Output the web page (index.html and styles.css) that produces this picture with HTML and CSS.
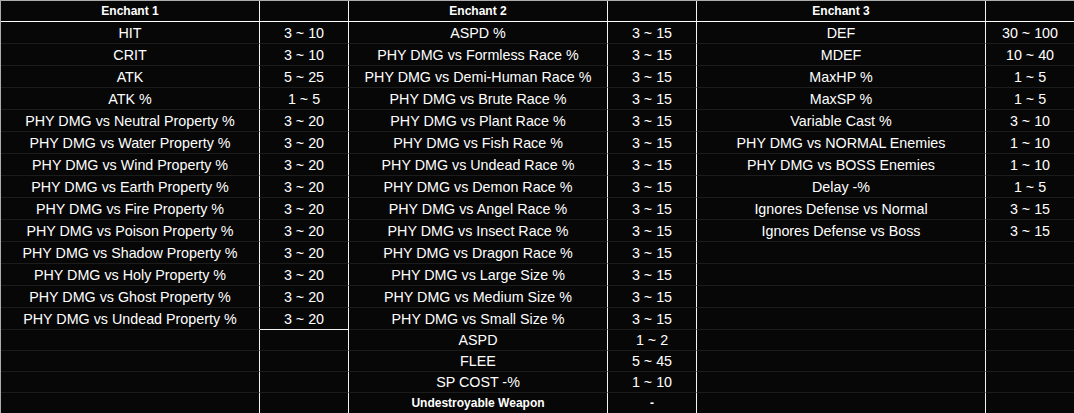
FILE: index.html
```html
<!DOCTYPE html>
<html lang="en">
<head>
    <title>Enchant List</title>
    <meta charset="utf-8">
    <meta name="viewport" content="width=device-width, initial-scale=1">
    <link rel="stylesheet" href="styles.css">
</head>
<body>
    <table class="enchant-table">
        <colgroup>
            <col class="col-name">
            <col class="col-value">
            <col class="col-name">
            <col class="col-value">
            <col class="col-name-wide">
            <col class="col-value-last">
        </colgroup>
        <thead>
            <tr>
                <th>Enchant 1</th>
                <th></th>
                <th>Enchant 2</th>
                <th></th>
                <th>Enchant 3</th>
                <th></th>
            </tr>
        </thead>
        <tbody>
            <tr>
                <td>HIT</td><td>3 ~ 10</td>
                <td>ASPD %</td><td>3 ~ 15</td>
                <td>DEF</td><td>30 ~ 100</td>
            </tr>
            <tr>
                <td>CRIT</td><td>3 ~ 10</td>
                <td>PHY DMG vs Formless Race %</td><td>3 ~ 15</td>
                <td>MDEF</td><td>10 ~ 40</td>
            </tr>
            <tr>
                <td>ATK</td><td>5 ~ 25</td>
                <td>PHY DMG vs Demi-Human Race %</td><td>3 ~ 15</td>
                <td>MaxHP %</td><td>1 ~ 5</td>
            </tr>
            <tr>
                <td>ATK %</td><td>1 ~ 5</td>
                <td>PHY DMG vs Brute Race %</td><td>3 ~ 15</td>
                <td>MaxSP %</td><td>1 ~ 5</td>
            </tr>
            <tr>
                <td>PHY DMG vs Neutral Property %</td><td>3 ~ 20</td>
                <td>PHY DMG vs Plant Race %</td><td>3 ~ 15</td>
                <td>Variable Cast %</td><td>3 ~ 10</td>
            </tr>
            <tr>
                <td>PHY DMG vs Water Property %</td><td>3 ~ 20</td>
                <td>PHY DMG vs Fish Race %</td><td>3 ~ 15</td>
                <td>PHY DMG vs NORMAL Enemies</td><td>1 ~ 10</td>
            </tr>
            <tr>
                <td>PHY DMG vs Wind Property %</td><td>3 ~ 20</td>
                <td>PHY DMG vs Undead Race %</td><td>3 ~ 15</td>
                <td>PHY DMG vs BOSS Enemies</td><td>1 ~ 10</td>
            </tr>
            <tr>
                <td>PHY DMG vs Earth Property %</td><td>3 ~ 20</td>
                <td>PHY DMG vs Demon Race %</td><td>3 ~ 15</td>
                <td>Delay -%</td><td>1 ~ 5</td>
            </tr>
            <tr>
                <td>PHY DMG vs Fire Property %</td><td>3 ~ 20</td>
                <td>PHY DMG vs Angel Race %</td><td>3 ~ 15</td>
                <td>Ignores Defense vs Normal</td><td>3 ~ 15</td>
            </tr>
            <tr>
                <td>PHY DMG vs Poison Property %</td><td>3 ~ 20</td>
                <td>PHY DMG vs Insect Race %</td><td>3 ~ 15</td>
                <td>Ignores Defense vs Boss</td><td>3 ~ 15</td>
            </tr>
            <tr>
                <td>PHY DMG vs Shadow Property %</td><td>3 ~ 20</td>
                <td>PHY DMG vs Dragon Race %</td><td>3 ~ 15</td>
                <td></td><td></td>
            </tr>
            <tr>
                <td>PHY DMG vs Holy Property %</td><td>3 ~ 20</td>
                <td>PHY DMG vs Large Size %</td><td>3 ~ 15</td>
                <td></td><td></td>
            </tr>
            <tr>
                <td>PHY DMG vs Ghost Property %</td><td>3 ~ 20</td>
                <td>PHY DMG vs Medium Size %</td><td>3 ~ 15</td>
                <td></td><td></td>
            </tr>
            <tr>
                <td>PHY DMG vs Undead Property %</td><td class="group-end">3 ~ 20</td>
                <td>PHY DMG vs Small Size %</td><td>3 ~ 15</td>
                <td></td><td></td>
            </tr>
            <tr class="short">
                <td></td><td></td>
                <td>ASPD</td><td>1 ~ 2</td>
                <td></td><td></td>
            </tr>
            <tr class="short">
                <td></td><td></td>
                <td>FLEE</td><td>5 ~ 45</td>
                <td></td><td></td>
            </tr>
            <tr class="short">
                <td></td><td></td>
                <td>SP COST -%</td><td>1 ~ 10</td>
                <td></td><td></td>
            </tr>
            <tr class="short">
                <td></td><td></td>
                <td class="strong">Undestroyable Weapon</td><td class="strong">-</td>
                <td></td><td></td>
            </tr>
        </tbody>
    </table>
</body>
</html>
```

FILE: styles.css
```css
* {
    box-sizing: border-box;
}

body {
    margin: 0;
    background-color: #070707;
    font-family: "Liberation Sans", Arial, sans-serif;
}

.enchant-table {
    width: 1074px;
    table-layout: fixed;
    border-collapse: separate;
    border-spacing: 0;
    border-top: 1px solid #adadad;
    border-left: 1px solid #adadad;
    background-color: #070707;
    color: #ffffff;
}

.col-name {
    width: 259px;
}

.col-value {
    width: 89px;
}

.col-name-wide {
    width: 289px;
}

.col-value-last {
    width: 88px;
}

th, td {
    padding: 1px 0 0 0;
    text-align: center;
    white-space: nowrap;
    overflow: hidden;
    font-size: 14.3px;
    line-height: 20px;
    border-right: 1px solid #f2f2f2;
    border-bottom: 1px solid #1c1c1c;
}

th:last-child, td:last-child {
    border-right: none;
}

thead th {
    font-size: 12px;
    font-weight: bold;
    line-height: 19px;
    border-bottom-color: #ffffff;
}

tr.short td {
    line-height: 19px;
}

td.strong {
    font-size: 12px;
    font-weight: bold;
}

td.group-end {
    border-bottom-color: #f2f2f2;
}
```
